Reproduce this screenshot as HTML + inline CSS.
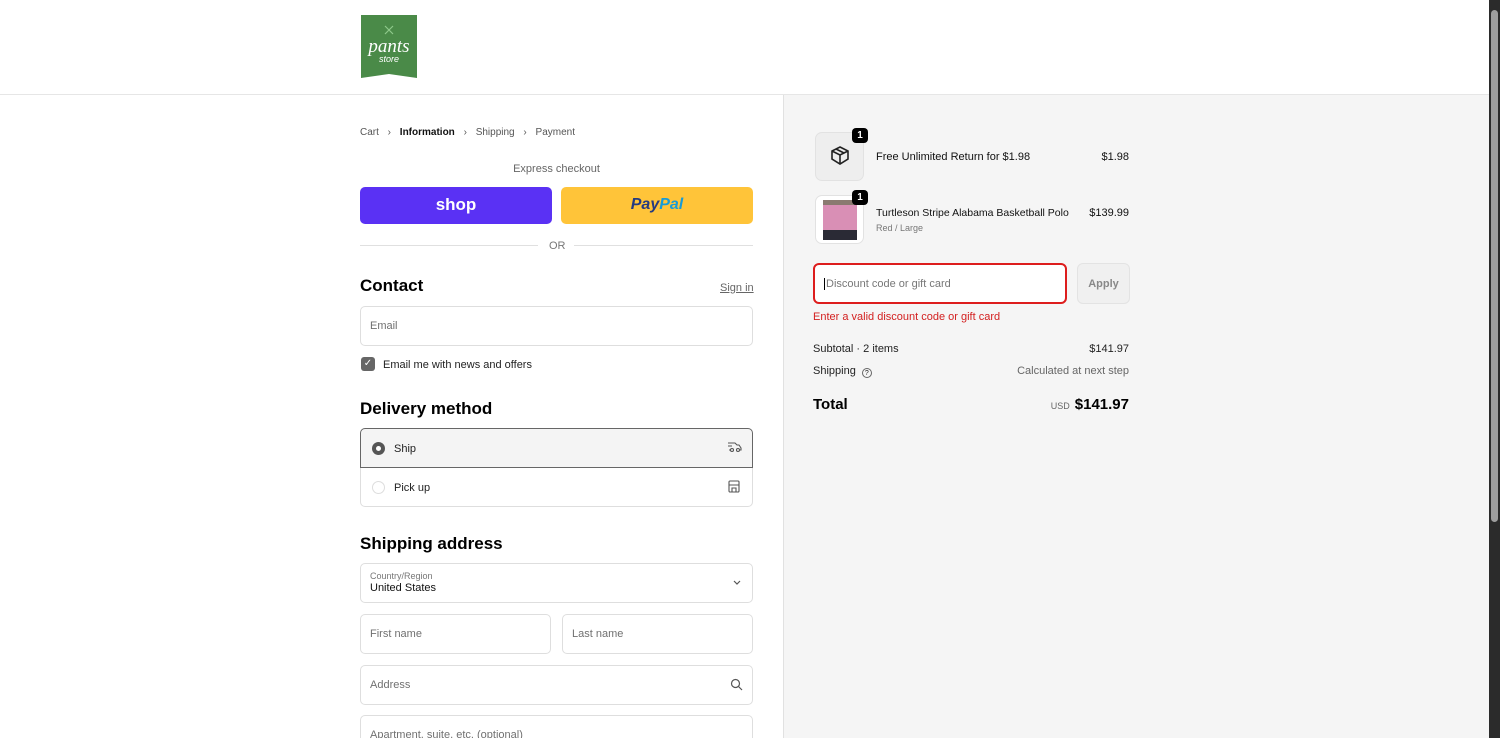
<!DOCTYPE html>
<html><head><meta charset="utf-8"><style>
*{box-sizing:border-box;margin:0;padding:0}
html,body{width:1500px;height:738px;overflow:hidden}
body{background:#fff;font-family:"Liberation Sans",sans-serif;color:#000;position:relative}
.a{position:absolute}
.r{position:absolute;right:371px;white-space:nowrap}
.inp{position:absolute;border:1px solid #dedede;border-radius:5px;background:#fff;font-size:11px;color:#707070;padding-left:9px;display:flex;align-items:center}
.f11{font-size:11px;white-space:nowrap}
</style></head><body>
<div class="a" style="left:0;top:94px;width:1489px;height:1px;background:#e6e6e6"></div>
<div class="a" style="left:783px;top:95px;width:706px;height:643px;background:#f5f5f5;border-left:1px solid #e1e1e1"></div>
<svg class="a" style="left:361px;top:15px" width="56" height="63" viewBox="0 0 56 63">
<path d="M0 0H56V63L28 59L0 63Z" fill="#4a8a48"/>
<path d="M24 11l8 8M32 11l-8 8" stroke="#8fc98a" stroke-width="1.2"/>
<text x="28" y="37" text-anchor="middle" font-family="Liberation Serif" font-style="italic" font-size="19" fill="#fff">pants</text>
<text x="28" y="47" text-anchor="middle" font-family="Liberation Sans" font-style="italic" font-size="9" fill="#fff">store</text>
</svg>
<div class="a" style="left:360px;top:127px;color:#555;font-size:10px;white-space:nowrap">Cart <span style="margin:0 6px">›</span> <b style="color:#111">Information</b> <span style="margin:0 6px">›</span> Shipping <span style="margin:0 6px">›</span> Payment</div>
<div class="a f11" style="left:360px;width:393px;top:163px;text-align:center;color:#666">Express checkout</div>
<div class="a" style="left:360px;top:187px;width:192px;height:37px;background:#5a31f4;border-radius:5px;color:#fff;font-weight:bold;font-size:17px;text-align:center;line-height:36px">shop</div>
<div class="a" style="left:561px;top:187px;width:192px;height:37px;background:#ffc439;border-radius:5px;text-align:center;line-height:36px;font-weight:bold;font-style:italic;font-size:16px"><span style="color:#253b80">Pay</span><span style="color:#179bd7">Pal</span></div>
<div class="a" style="left:360px;top:245px;width:178px;height:1px;background:#e0e0e0"></div>
<div class="a" style="left:574px;top:245px;width:179px;height:1px;background:#e0e0e0"></div>
<div class="a f11" style="left:549px;top:240px;color:#777">OR</div>
<div class="a" style="left:360px;top:276px;font-size:17px;font-weight:bold">Contact</div>
<div class="a f11" style="left:720px;top:282px;color:#666;text-decoration:underline">Sign in</div>
<div class="inp" style="left:360px;top:306px;width:393px;height:40px">Email</div>
<div class="a" style="left:361px;top:357px;width:14px;height:14px;background:#666;border-radius:3px;color:#fff;font-size:10px;text-align:center;line-height:14px">✓</div>
<div class="a f11" style="left:383px;top:359px;color:#222">Email me with news and offers</div>
<div class="a" style="left:360px;top:399px;font-size:17px;font-weight:bold">Delivery method</div>
<div class="a" style="left:360px;top:468px;width:393px;height:39px;border:1px solid #dedede;border-top:none;border-radius:0 0 5px 5px"></div>
<div class="a" style="left:360px;top:428px;width:393px;height:40px;border:1px solid #666;border-radius:5px 5px 0 0;background:#f4f4f4"></div>
<div class="a" style="left:372px;top:442px;width:13px;height:13px;border-radius:50%;background:#555"><div style="margin:4px;width:5px;height:5px;border-radius:50%;background:#fff"></div></div>
<div class="a f11" style="left:394px;top:443px;color:#222">Ship</div>
<svg class="a" style="left:727px;top:440px" width="15" height="14" viewBox="0 0 15 14" fill="none" stroke="#555" stroke-width="1.1"><path d="M1 3h7l2 2h2l2 3v2h-2M4 10H2M1 6h4"/><circle cx="5" cy="10" r="1.5"/><circle cx="11" cy="10" r="1.5"/></svg>
<div class="a" style="left:372px;top:481px;width:13px;height:13px;border-radius:50%;border:1px solid #ddd"></div>
<div class="a f11" style="left:394px;top:482px;color:#222">Pick up</div>
<svg class="a" style="left:728px;top:480px" width="12" height="13" viewBox="0 0 12 13" fill="none" stroke="#555" stroke-width="1.1"><rect x="1" y="1" width="10" height="11" rx="1"/><path d="M1 5h10M4 12V8h4v4"/></svg>
<div class="a" style="left:360px;top:534px;font-size:17px;font-weight:bold">Shipping address</div>
<div class="inp" style="left:360px;top:563px;width:393px;height:40px;display:block;padding-top:7px"><div style="font-size:9px;color:#777">Country/Region</div><div style="color:#111;font-size:11px;margin-top:1px">United States</div></div>
<svg class="a" style="left:733px;top:580px" width="8" height="6" viewBox="0 0 8 6"><path d="M1 1l3 3 3-3" stroke="#555" fill="none" stroke-width="1.2"/></svg>
<div class="inp" style="left:360px;top:614px;width:191px;height:40px">First name</div>
<div class="inp" style="left:562px;top:614px;width:191px;height:40px">Last name</div>
<div class="inp" style="left:360px;top:665px;width:393px;height:40px">Address</div>
<svg class="a" style="left:730px;top:678px" width="13" height="13" viewBox="0 0 13 13" fill="none" stroke="#555" stroke-width="1.2"><circle cx="5.5" cy="5.5" r="4"/><path d="M8.5 8.5l3.5 3.5"/></svg>
<div class="inp" style="left:360px;top:715px;width:393px;height:40px;align-items:flex-start;padding-top:13px">Apartment, suite, etc. (optional)</div>
<div class="a" style="left:815px;top:132px;width:49px;height:49px;border:1px solid #e2e2e2;border-radius:7px;background:#eee"></div>
<svg class="a" style="left:829px;top:145px" width="22" height="22" viewBox="0 0 22 22" fill="none" stroke="#222" stroke-width="1.6"><path d="M11 2l8 4v8l-8 5-8-5V6z M3 6l8 4 8-4 M11 10v9 M7 4l8 4"/></svg>
<div class="a" style="left:852px;top:128px;width:16px;height:15px;background:#000;border-radius:4px;color:#fff;font-size:10px;font-weight:bold;text-align:center;line-height:15px">1</div>
<div class="a f11" style="left:876px;top:151px;color:#111">Free Unlimited Return for $1.98</div>
<div class="r f11" style="top:151px;color:#111">$1.98</div>
<div class="a" style="left:815px;top:195px;width:49px;height:49px;border:1px solid #e2e2e2;border-radius:7px;background:#fff;overflow:hidden"><div style="margin:4px 7px;width:34px;height:40px;background:linear-gradient(#8a7a70 0,#8a7a70 12%,#d98fb5 12%,#d98fb5 75%,#2a2a35 75%)"></div></div>
<div class="a" style="left:852px;top:190px;width:16px;height:15px;background:#000;border-radius:4px;color:#fff;font-size:10px;font-weight:bold;text-align:center;line-height:15px">1</div>
<div class="a" style="left:876px;top:207px;color:#111;font-size:10.5px;white-space:nowrap">Turtleson Stripe Alabama Basketball Polo</div>
<div class="a" style="left:876px;top:223px;color:#777;font-size:9px">Red / Large</div>
<div class="r f11" style="top:207px;color:#111">$139.99</div>
<div class="a" style="left:813px;top:263px;width:254px;height:41px;border:2px solid #dd1d1d;border-radius:6px;background:#fff;font-size:11px;color:#777;padding:13px 0 0 9px;white-space:nowrap"><span style="border-left:1px solid #000;padding-left:1px">Discount code or gift card</span></div>
<div class="a" style="left:1077px;top:263px;width:53px;height:41px;border:1px solid #e3e3e3;border-radius:6px;background:#f0f0f0;color:#888;font-size:11px;font-weight:bold;text-align:center;line-height:40px">Apply</div>
<div class="a f11" style="left:813px;top:311px;color:#d32020">Enter a valid discount code or gift card</div>
<div class="a f11" style="left:813px;top:343px;color:#222">Subtotal · 2 items</div>
<div class="r f11" style="top:343px;color:#222">$141.97</div>
<div class="a f11" style="left:813px;top:365px;color:#222">Shipping <span style="display:inline-block;width:10px;height:10px;border:1px solid #666;border-radius:50%;font-size:7px;text-align:center;line-height:9px;margin-left:3px;vertical-align:-1px">?</span></div>
<div class="r f11" style="top:365px;color:#666">Calculated at next step</div>
<div class="a" style="left:813px;top:396px;font-size:15px;font-weight:bold">Total</div>
<div class="r" style="top:396px;font-size:15px;font-weight:bold"><span style="font-size:9px;color:#666;font-weight:normal;margin-right:5px">USD</span>$141.97</div>
<div class="a" style="left:1489px;top:0;width:11px;height:738px;background:#2b2b2b"></div>
<div class="a" style="left:1491px;top:10px;width:7px;height:512px;background:#9e9e9e;border-radius:4px"></div>
</body></html>
